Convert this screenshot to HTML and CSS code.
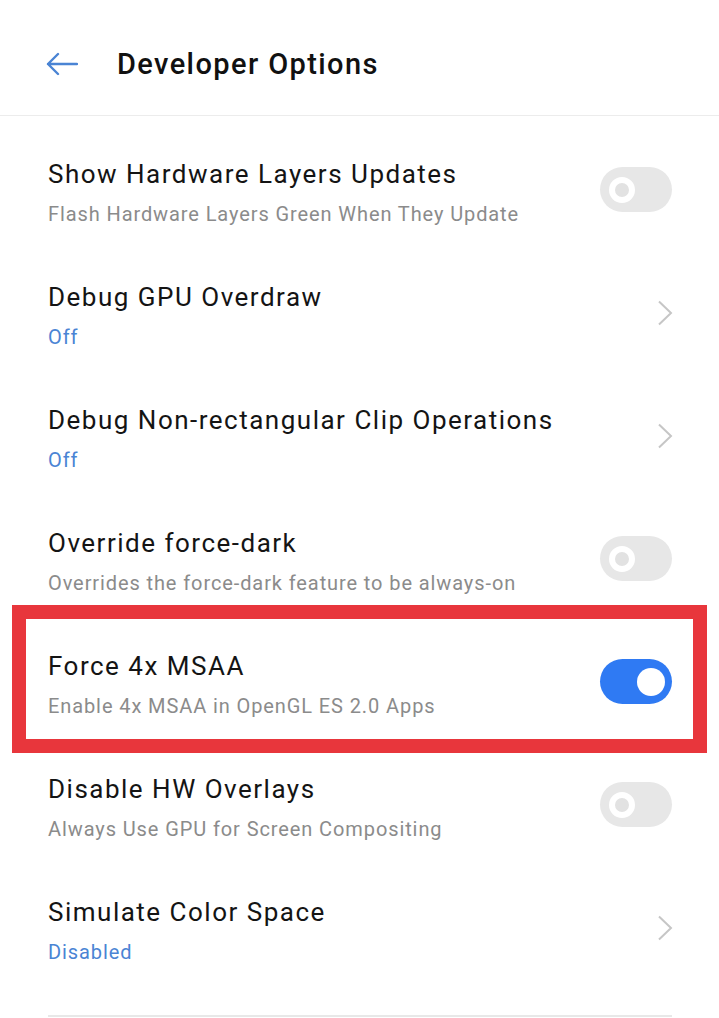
FILE: index.html
```html
<!DOCTYPE html>
<html lang="en">
<head>
<meta charset="utf-8">
<title>Developer Options</title>
<link rel="stylesheet" href="styles.css">
</head>
<body>
<div class="screen">
  <header class="appbar">
    <svg class="back" width="32" height="24" viewBox="0 0 32 24" aria-hidden="true">
      <path d="M31 12 H2 M12 2 L2 12 L12 22" fill="none" stroke="#4a84d4" stroke-width="2.4" stroke-linecap="round" stroke-linejoin="round"/>
    </svg>
    <h1 class="appbar-title">Developer Options</h1>
  </header>
  <ul class="list">
    <li class="row">
      <div class="text">
        <div class="title">Show Hardware Layers Updates</div>
        <div class="sub">Flash Hardware Layers Green When They Update</div>
      </div>
      <span class="switch"><span class="knob"></span></span>
    </li>
    <li class="row">
      <div class="text">
        <div class="title">Debug GPU Overdraw</div>
        <div class="sub value">Off</div>
      </div>
      <svg class="chev" width="16" height="26" viewBox="0 0 16 26" aria-hidden="true"><path d="M2 1.5 L14 13 L2 24.5" fill="none" stroke="#c6c6c6" stroke-width="2"/></svg>
    </li>
    <li class="row">
      <div class="text">
        <div class="title">Debug Non-rectangular Clip Operations</div>
        <div class="sub value">Off</div>
      </div>
      <svg class="chev" width="16" height="26" viewBox="0 0 16 26" aria-hidden="true"><path d="M2 1.5 L14 13 L2 24.5" fill="none" stroke="#c6c6c6" stroke-width="2"/></svg>
    </li>
    <li class="row">
      <div class="text">
        <div class="title">Override force-dark</div>
        <div class="sub">Overrides the force-dark feature to be always-on</div>
      </div>
      <span class="switch"><span class="knob"></span></span>
    </li>
    <li class="row">
      <div class="text">
        <div class="title">Force 4x MSAA</div>
        <div class="sub">Enable 4x MSAA in OpenGL ES 2.0 Apps</div>
      </div>
      <span class="switch on"><span class="knob"></span></span>
    </li>
    <li class="row">
      <div class="text">
        <div class="title">Disable HW Overlays</div>
        <div class="sub">Always Use GPU for Screen Compositing</div>
      </div>
      <span class="switch"><span class="knob"></span></span>
    </li>
    <li class="row">
      <div class="text">
        <div class="title">Simulate Color Space</div>
        <div class="sub value">Disabled</div>
      </div>
      <svg class="chev" width="16" height="26" viewBox="0 0 16 26" aria-hidden="true"><path d="M2 1.5 L14 13 L2 24.5" fill="none" stroke="#c6c6c6" stroke-width="2"/></svg>
    </li>
  </ul>
  <div class="end-line"></div>
  <div class="highlight"></div>
</div>
</body>
</html>
```
FILE: styles.css
```css
* { box-sizing: border-box; }
html, body { margin: 0; padding: 0; background: #ffffff; }
body {
  font-family: Roboto, "Liberation Sans", sans-serif;
  color: #151515;
  width: 719px;
  height: 1018px;
  overflow: hidden;
}
.screen { position: relative; width: 719px; height: 1018px; }
.appbar {
  height: 116px;
  display: flex;
  align-items: center;
  padding: 12px 0 0 46px;
  border-bottom: 1px solid #ececec;
}
.back { display: block; flex: none; }
.appbar-title {
  margin: 0 0 0 39px;
  font-size: 29px;
  font-weight: 500;
  color: #111;
  letter-spacing: 1.4px;
}
.list { list-style: none; margin: 0; padding: 15px 0 0 0; }
.row {
  height: 123px;
  display: flex;
  align-items: center;
  padding: 0 47px 0 48px;
}
.text { flex: 1; min-width: 0; white-space: nowrap; }
.title { font-size: 26px; line-height: 34px; color: #141414; letter-spacing: 1.5px; }
.sub { font-size: 20px; line-height: 28px; margin-top: 9px; color: #8b8b8b; letter-spacing: 0.9px; }
.sub.value { color: #4a84d4; }
.switch {
  flex: none;
  width: 72px;
  height: 45px;
  border-radius: 23px;
  background: #e7e7e7;
  position: relative;
  margin-bottom: 6px;
}
.switch .knob {
  position: absolute;
  left: 9px;
  top: 9.5px;
  width: 26px;
  height: 26px;
  border-radius: 50%;
  border: 6px solid #ffffff;
  background: #e2e2e2;
}
.switch.on { background: #2f7af3; }
.switch.on .knob {
  left: 37px;
  top: 8.5px;
  width: 28px;
  height: 28px;
  border: none;
  background: #ffffff;
}
.chev { flex: none; display: block; margin-right: -1px; margin-bottom: 6px; }
.end-line {
  margin: 23px 47px 0 48px;
  height: 2px;
  background: #e8e8e8;
}
.highlight {
  position: absolute;
  left: 12px;
  top: 605px;
  width: 695px;
  height: 148px;
  border: 14px solid #e8363c;
  pointer-events: none;
}
```
